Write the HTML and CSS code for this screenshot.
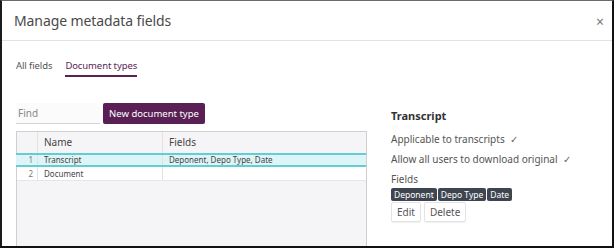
FILE: index.html
```html
<!DOCTYPE html>
<html>
<head>
  <title>Manage metadata fields</title>
  <link rel="stylesheet" href="styles.css">
</head>
<body>
  <div class="dialog">
    <!-- Dialog header -->
    <div class="dialog-header">
      <span class="dialog-title">Manage metadata fields</span>
      <span class="close-btn">&times;</span>
    </div>

    <!-- Tabs -->
    <div class="tabs">
      <span class="tab">All fields</span>
      <span class="tab active">Document types</span>
    </div>

    <div class="content">
      <!-- Left: list of document types -->
      <div class="list-pane">
        <div class="toolbar">
          <input type="text" class="find-input" placeholder="Find">
          <button class="primary-btn">New document type</button>
        </div>
        <div class="grid">
          <div class="grid-row grid-head">
            <div class="cell num"></div>
            <div class="cell name">Name</div>
            <div class="cell fields">Fields</div>
          </div>
          <div class="grid-row selected">
            <div class="cell num">1</div>
            <div class="cell name">Transcript</div>
            <div class="cell fields">Deponent, Depo Type, Date</div>
          </div>
          <div class="grid-row">
            <div class="cell num">2</div>
            <div class="cell name">Document</div>
            <div class="cell fields"></div>
          </div>
          <div class="grid-empty"></div>
        </div>
      </div>

      <!-- Right: details of selected type -->
      <div class="detail-pane">
        <h3 class="detail-title">Transcript</h3>
        <div class="detail-line">Applicable to transcripts <span class="check">&#10003;</span></div>
        <div class="detail-line">Allow all users to download original <span class="check">&#10003;</span></div>
        <div class="detail-line last">Fields</div>
        <div class="badges">
          <span class="badge">Deponent</span>
          <span class="badge">Depo Type</span>
          <span class="badge">Date</span>
        </div>
        <div class="actions">
          <button class="plain-btn">Edit</button>
          <button class="plain-btn">Delete</button>
        </div>
      </div>
    </div>
  </div>
</body>
</html>
```

FILE: styles.css
```css
html, body {
  margin: 0;
  height: 100%;
}
body {
  font-family: "Noto Sans", "Open Sans", sans-serif;
  color: #444;
  background: #fff;
}
.dialog {
  box-sizing: border-box;
  height: 248px;
  border-left: 2px solid #1a1a1a;
  border-top: 1px solid #6a6a6a;
  border-right: 2px solid #111;
  border-bottom: 2px solid #111;
  display: flex;
  flex-direction: column;
  overflow: hidden;
}
.dialog-header {
  display: flex;
  align-items: center;
  justify-content: space-between;
  height: 39px;
  padding: 0 8px 0 12px;
  border-bottom: 1px solid #e2e2e2;
}
.dialog-title {
  font-size: 14px;
  letter-spacing: -0.1px;
  color: #4a4a4a;
}
.close-btn {
  font-size: 14px;
  color: #777;
  margin-top: 1px;
}
.tabs {
  display: flex;
  gap: 13px;
  padding: 18px 0 0 14px;
  height: 19px;
}
.tab {
  font-size: 9.5px;
  letter-spacing: -0.1px;
  color: #555;
  line-height: 14px;
}
.tab.active {
  color: #5b1e55;
  border-bottom: 2px solid #5b1e55;
  height: 16px;
}
.content {
  display: flex;
  flex: 1;
  padding: 25px 0 0 14px;
}
.list-pane {
  width: 351px;
  display: flex;
  flex-direction: column;
}
.toolbar {
  display: flex;
  gap: 3px;
  height: 21px;
  margin-bottom: 7px;
}
.find-input {
  box-sizing: border-box;
  width: 84px;
  height: 21px;
  border: none;
  border-bottom: 1px solid #d4d4d4;
  background: #fbfbfb;
  padding: 0 2px;
  font-family: inherit;
  font-size: 10px;
  outline: none;
}
.find-input::placeholder {
  color: #888;
}
.primary-btn {
  width: 102px;
  height: 21px;
  padding: 0;
  border: none;
  border-radius: 2px;
  background: #5a1f55;
  color: #fff;
  font-family: inherit;
  font-size: 9.5px;
}
.grid {
  flex: 1;
  display: flex;
  flex-direction: column;
  border: 1px solid #cfcfcf;
  border-bottom: none;
  background: #f5f5f7;
  font-size: 8px;
}
.grid-row {
  display: flex;
  height: 12px;
  line-height: 12px;
  background: #fff;
  border-bottom: 1px solid #e6e6e6;
}
.grid-head {
  height: 21px;
  line-height: 21px;
  background: #f5f5f7;
  font-size: 10px;
  color: #555;
  border-bottom: none;
}
.grid-row.selected {
  background: #def4f7;
  border-top: 2px solid #63cdd5;
  border-bottom: 2px solid #63cdd5;
  margin-left: -1px;
  padding-left: 1px;
  height: 10px;
  line-height: 10px;
}
.grid-row + .grid-row:not(.selected) {
  height: 13px;
  line-height: 13px;
}
.cell {
  box-sizing: border-box;
  padding: 0 6px;
  color: #444;
  border-right: 1px solid #e2e2e2;
  white-space: nowrap;
}
.cell.num {
  width: 21px;
  text-align: right;
  padding: 0 4px;
  color: #777;
}
.cell.name {
  width: 125px;
}
.cell.fields {
  flex: 1;
  border-right: none;
}
.grid-empty {
  flex: 1;
}
.detail-pane {
  padding: 0 0 0 24px;
  margin-top: 5px;
}
.detail-title {
  margin: 0 0 9px;
  font-size: 11px;
  font-weight: bold;
  color: #333;
}
.detail-line {
  font-size: 10px;
  line-height: 14px;
  margin-bottom: 5px;
  color: #555;
}
.detail-line.last {
  margin-bottom: 2px;
}
.check {
  font-size: 9.5px;
  margin-left: 3px;
  color: #666;
}
.badges {
  display: flex;
}
.badge {
  background: #3e4550;
  color: #fff;
  font-size: 8.5px;
  line-height: 13px;
  padding: 0 3px;
  border-radius: 2px;
  margin-right: 1px;
}
.actions {
  display: flex;
  gap: 3px;
  margin-top: 1px;
}
.plain-btn {
  height: 20px;
  padding: 0 5px;
  border: 1px solid #e4e4e4;
  border-radius: 2px;
  background: #fff;
  color: #555;
  font-family: inherit;
  font-size: 10px;
  box-shadow: 0 1px 1px rgba(0,0,0,0.06);
}
```
